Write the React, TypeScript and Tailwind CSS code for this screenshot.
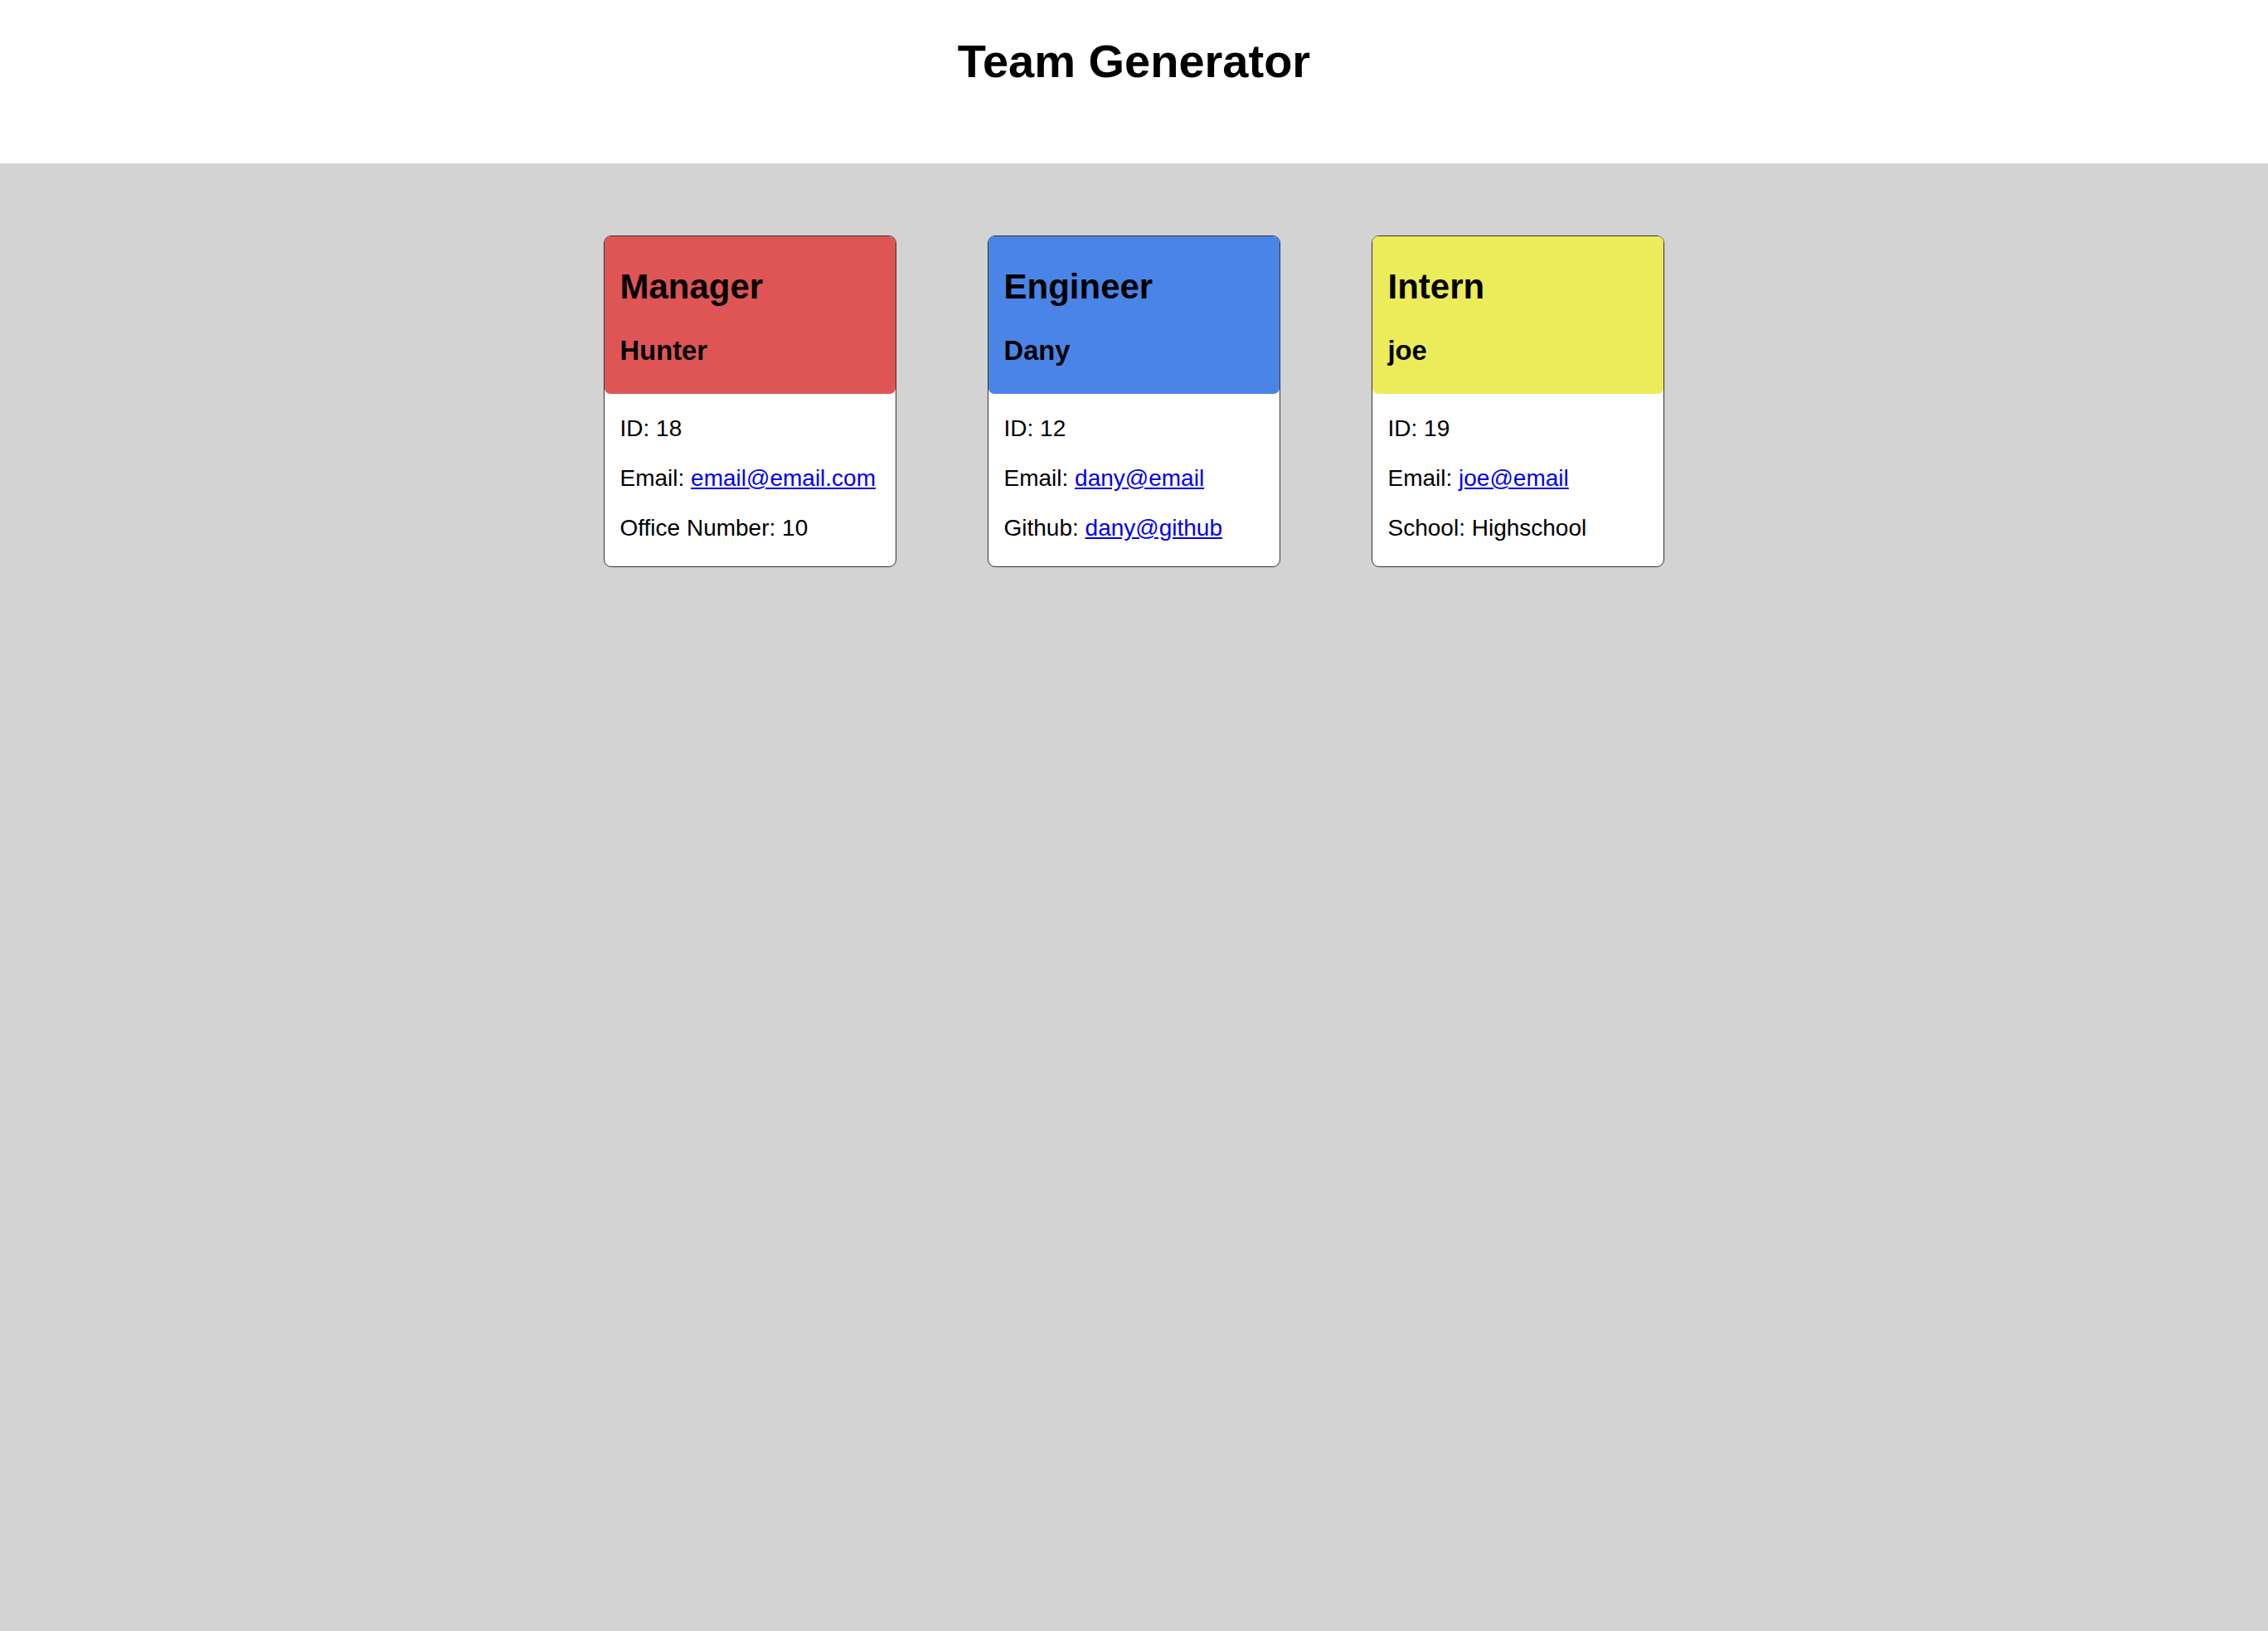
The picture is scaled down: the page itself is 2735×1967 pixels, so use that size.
import React from "react";

type Member = {
    role: string;
    name: string;
    id: number;
    email: string;
    extraLabel: string;
    extraValue: string;
    extraLink?: boolean;
    color: string;
};

const team: Member[] = [
    { role: "Manager", name: "Hunter", id: 18, email: "email@email.com", extraLabel: "Office Number", extraValue: "10", color: "bg-[#df5555]" },
    { role: "Engineer", name: "Dany", id: 12, email: "dany@email", extraLabel: "Github", extraValue: "dany@github", extraLink: true, color: "bg-[#4a84e6]" },
    { role: "Intern", name: "joe", id: 19, email: "joe@email", extraLabel: "School", extraValue: "Highschool", color: "bg-[#ecec5a]" },
];

const MemberCard: React.FC<Member> = (props) => {
    const { role, name, id, email, extraLabel, extraValue, extraLink, color } = props;

    return (
        <div className="w-[353px] rounded-[9px] border border-[#333] bg-white">
            {/* шапка картки */}
            <div className={`rounded-[7px] ${color} px-[18.5px] pt-[36.5px] pb-[33px]`}>
                <h2 className="text-[42px] font-bold leading-[normal]">{role}</h2>
                <h3 className="mt-[34px] text-[32.76px] font-bold leading-[normal]">{name}</h3>
            </div>

            <div className="flex flex-col gap-[28px] px-[18.5px] pt-[26.5px] pb-[29.5px] text-[28px] leading-[normal]">
                <p>ID: {id}</p>
                <p>
                    Email:{" "}
                    <a href={`mailto:${email}`} className="text-[#0000ee] underline">
                        {email}
                    </a>
                </p>
                <p>
                    {extraLabel}:{" "}
                    {extraLink ? (
                        <a href="#" className="text-[#0000ee] underline">
                            {extraValue}
                        </a>
                    ) : (
                        extraValue
                    )}
                </p>
            </div>
        </div>
    );
};

const App: React.FC = () => {
    return (
        <div className="min-h-screen bg-[#d3d3d3] text-black font-['Liberation_Sans',Arial,sans-serif]">
            <header className="h-[197px] bg-white pt-[41px]">
                <h1 className="text-center text-[56px] font-bold leading-[normal]">Team Generator</h1>
            </header>

            <main className="flex justify-center items-start gap-[110px] pt-[87px]">
                {team.map((member) => (
                    <MemberCard key={member.id} {...member} />
                ))}
            </main>
        </div>
    );
};

export default App;
